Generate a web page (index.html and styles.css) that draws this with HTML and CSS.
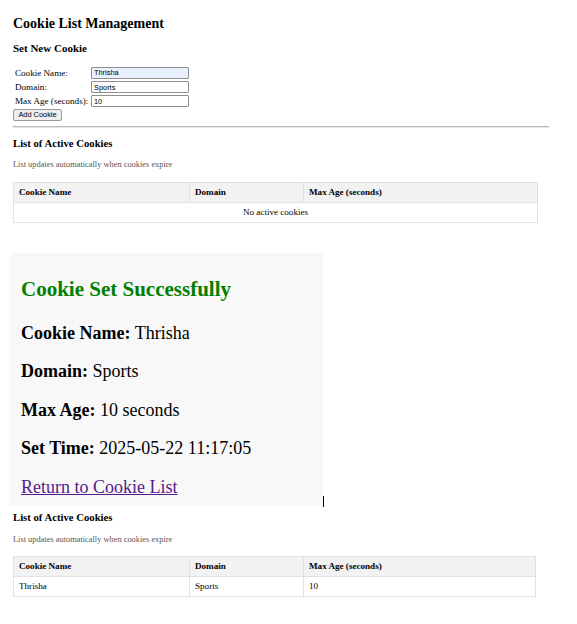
FILE: index.html
```html
<!DOCTYPE html>
<html lang="en">
<head>
<meta charset="utf-8">
<title>Cookie List Management</title>
<link rel="stylesheet" href="styles.css">
</head>
<body>
<section class="shot shot-top">
  <h1 class="page-title">Cookie List Management</h1>
  <h2 class="sec-title">Set New Cookie</h2>
  <form class="cookie-form">
    <label class="f-label">Cookie Name:</label><input class="f-input autofill" type="text" value="Thrisha">
    <label class="f-label">Domain:</label><input class="f-input" type="text" value="Sports">
    <label class="f-label">Max Age (seconds):</label><input class="f-input" type="text" value="10">
  </form>
  <button class="add-btn" type="button">Add Cookie</button>
  <hr class="divider">
  <h3 class="list-title">List of Active Cookies</h3>
  <p class="note">List updates automatically when cookies expire</p>
  <table class="cookie-table">
    <thead>
      <tr><th class="c1">Cookie Name</th><th class="c2">Domain</th><th class="c3">Max Age (seconds)</th></tr>
    </thead>
    <tbody>
      <tr><td class="empty" colspan="3">No active cookies</td></tr>
    </tbody>
  </table>
</section>

<section class="success">
  <h3 class="success-title">Cookie Set Successfully</h3>
  <p class="info"><strong>Cookie Name:</strong> Thrisha</p>
  <p class="info"><strong>Domain:</strong> Sports</p>
  <p class="info"><strong>Max Age:</strong> 10 seconds</p>
  <p class="info"><strong>Set Time:</strong> 2025-05-22 11:17:05</p>
  <p class="info last"><a class="return-link" href="#">Return to Cookie List</a></p>
  <span class="caret"></span>
</section>

<section class="shot shot-bottom">
  <h3 class="list-title first">List of Active Cookies</h3>
  <p class="note">List updates automatically when cookies expire</p>
  <table class="cookie-table narrow">
    <thead>
      <tr><th class="c1">Cookie Name</th><th class="c2">Domain</th><th class="c3">Max Age (seconds)</th></tr>
    </thead>
    <tbody>
      <tr><td>Thrisha</td><td>Sports</td><td>10</td></tr>
    </tbody>
  </table>
</section>
</body>
</html>
```

FILE: styles.css
```css
html, body {
  margin: 0;
  padding: 0;
  background: #ffffff;
}

body {
  font-family: "Liberation Serif", "Times New Roman", serif;
  color: #000;
  width: 577px;
  height: 624px;
  overflow: hidden;
}

.shot {
  padding-left: 13px;
  padding-right: 28px;
}

.shot-top {
  padding-top: 15.5px;
}

.page-title {
  margin: 0;
  font-size: 14px;
  line-height: 16px;
  font-weight: bold;
}

.sec-title {
  margin: 10px 0 0;
  font-size: 11px;
  line-height: 13px;
  font-weight: bold;
}

.cookie-form {
  margin: 12.2px 0 0;
  padding-left: 2px;
  display: grid;
  grid-template-columns: 76px 98px;
  grid-auto-rows: 12px;
  row-gap: 2.4px;
}

.f-label {
  font-size: 9.1px;
  line-height: 12px;
  white-space: nowrap;
}

.f-input {
  box-sizing: border-box;
  width: 98px;
  height: 12px;
  margin: 0;
  padding: 0 2px;
  border: 1px solid #8f8f8f;
  border-radius: 1px;
  background: #fff;
  font-family: "Liberation Sans", Arial, sans-serif;
  font-size: 7.4px;
  line-height: 10px;
  color: #000;
}

.autofill {
  background: #e8f0fe;
}

.add-btn {
  display: block;
  box-sizing: border-box;
  margin: 1.5px 0 0;
  width: 49px;
  height: 12px;
  padding: 0;
  border: 1px solid #9a9a9a;
  border-radius: 2px;
  background: #efefef;
  font-family: "Liberation Sans", Arial, sans-serif;
  font-size: 7.4px;
  line-height: 10px;
  color: #000;
}

.divider {
  margin: 5px 0 0;
  height: 0;
  border: 0;
  border-top: 1px solid #b8b8b8;
  border-bottom: 1px solid #e6e6e6;
}

.list-title {
  margin: 9px 0 0;
  font-size: 10.7px;
  line-height: 13px;
  font-weight: bold;
}

.list-title.first {
  margin-top: 5.5px;
}

.note {
  margin: 10.2px 0 0;
  font-size: 8.4px;
  line-height: 10px;
  color: #555;
}

.cookie-table {
  margin-top: 11.8px;
  width: 525px;
  border-collapse: collapse;
  table-layout: fixed;
  font-size: 9.1px;
  line-height: 11px;
}

.cookie-table.narrow {
  margin-top: 11.5px;
  width: 523px;
}

.cookie-table th,
.cookie-table td {
  border: 1px solid #e2e2e2;
  padding: 4px 5px;
  text-align: left;
  white-space: nowrap;
}

.cookie-table th {
  background: #f2f2f2;
  font-weight: bold;
}

.cookie-table .c1 { width: 165px; }
.cookie-table .c2 { width: 103px; }

.cookie-table td.empty {
  text-align: center;
}

.success {
  position: relative;
  box-sizing: border-box;
  margin: 30px 0 0 10px;
  width: 313px;
  padding: 10px 11px 8.5px;
  background: #f8f8f8;
  font-size: 18px;
}

.success-title {
  margin: 14px 0 22px;
  font-size: 21px;
  line-height: 24px;
  font-weight: bold;
  color: #008000;
}

.info {
  margin: 0 0 18px;
  line-height: 20.5px;
}

.info.last {
  margin-bottom: 0;
}

.return-link {
  color: #551a8b;
  text-decoration: underline;
}

.caret {
  position: absolute;
  left: 313px;
  top: 243px;
  width: 1px;
  height: 11px;
  background: #000;
}
```
